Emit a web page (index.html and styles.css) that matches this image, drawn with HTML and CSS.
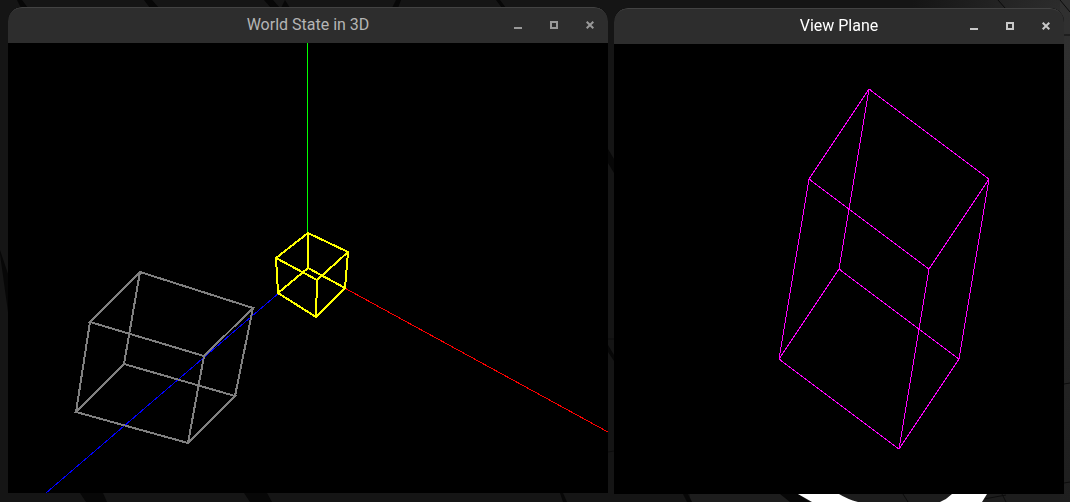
FILE: index.html
```html
<!DOCTYPE html>
<html lang="en">
<head>
<meta charset="utf-8">
<title>3D view planes</title>
<link rel="stylesheet" href="styles.css">
</head>
<body>
<svg class="wallpaper" viewBox="0 0 1070 502" preserveAspectRatio="none" aria-hidden="true">
  <defs>
    <radialGradient id="glow" cx="1070" cy="30" r="160" gradientUnits="userSpaceOnUse">
      <stop offset="0" stop-color="#303030"/>
      <stop offset="1" stop-color="#303030" stop-opacity="0"/>
    </radialGradient>
    <linearGradient id="edge" x1="0" x2="0" y1="0" y2="1">
      <stop offset="0" stop-color="#303030"/>
      <stop offset="1" stop-color="#1e1e1e"/>
    </linearGradient>
  </defs>
  <rect width="1070" height="502" fill="#151515"/>
  <rect x="690" y="490" width="380" height="12" fill="#1d1d1d"/>
  <rect x="1060" width="10" height="502" fill="url(#edge)"/>
  <rect x="880" width="190" height="60" fill="url(#glow)"/>
  <g fill="#070707">
    <path d="M17 0h5l6 8h-7zM144 0h8l7 8h-9zM264 0h9l7 8h-9zM285 0l5 8h-9zM396 0h5l-3 8h-6zM496 0h4l6 8h-4z"/>
    <path d="M0 250l8 24v38l-8-58zM608 149l6 10v14l-6-10zM608 345l6 10v6l-6-9z"/>
    <path d="M80 493h23l4 9H86zM244 493h23l5 9h-22zM560 493h3l4 9h-4zM683 494h5l4 8h-5zM780 494h18l12 8h-20z"/>
  </g>
  <g fill="none" stroke="#0c0c0c">
    <path d="M608 339h6M608 452l6-1M1064 35h6M1064 384l6-1M1064 483l6-1M998 0l7 8M1060 0l10 12M903 494l5 8M984 499l22-4M1002 494l4 8"/>
  </g>
  <path d="M798 494h41q8 5 19 8h-46zM952 494h35l-5 8h-42q7-3 12-8z" fill="#fff"/>
</svg>
<main class="desktop">
  <section class="window window-inactive" aria-labelledby="world-title">
    <header class="titlebar">
      <h1 class="title" id="world-title">World State in 3D</h1>
      <div class="controls">
        <button class="control" type="button" aria-label="Minimize"><svg class="icon" viewBox="0 0 8 8"><path d="M0 6h8v2H0z"/></svg></button>
        <button class="control" type="button" aria-label="Maximize"><svg class="icon" viewBox="0 0 8 8"><path fill-rule="evenodd" d="M0 0h8v8H0zM2 2v4h4V2z"/></svg></button>
        <button class="control" type="button" aria-label="Close"><svg class="icon" viewBox="0 0 8 8"><path class="cross" d="M.7.7l6.6 6.6M7.3.7L.7 7.3"/></svg></button>
      </div>
    </header>
    <svg class="scene" viewBox="8 43 600 450" role="img" aria-label="Two wireframe boxes and the coordinate axes">
      <path class="axis axis-y" d="M307.5 43V268"/>
      <path class="axis axis-x" d="M308 268L608 432"/>
      <path class="axis axis-z" d="M308 268L46 493"/>
      <path class="box box-grey" d="M140 272L253 308L204 356L90 322ZM124 364L235 396L188 443L76 412ZM140 272L124 364M253 308L235 396M204 356L188 443M90 322L76 412"/>
      <path class="box box-yellow" d="M308 233L348 252L317 280L276 258ZM308 268L345 288L316 317L278 293ZM308 233V268M348 252L345 288M317 280L316 317M276 258L278 293"/>
    </svg>
  </section>
  <section class="window window-active" aria-labelledby="plane-title">
    <header class="titlebar">
      <h1 class="title" id="plane-title">View Plane</h1>
      <div class="controls">
        <button class="control" type="button" aria-label="Minimize"><svg class="icon" viewBox="0 0 8 8"><path d="M0 6h8v2H0z"/></svg></button>
        <button class="control" type="button" aria-label="Maximize"><svg class="icon" viewBox="0 0 8 8"><path fill-rule="evenodd" d="M0 0h8v8H0zM2 2v4h4V2z"/></svg></button>
        <button class="control" type="button" aria-label="Close"><svg class="icon" viewBox="0 0 8 8"><path class="cross" d="M.7.7l6.6 6.6M7.3.7L.7 7.3"/></svg></button>
      </div>
    </header>
    <svg class="scene" viewBox="614 44 450 450" role="img" aria-label="Projected wireframe box">
      <path class="projection" d="M869 89L989 179L929 269L809 179ZM839 269L959 359L899 449L779 359ZM869 89L839 269M989 179L959 359M929 269L899 449M809 179L779 359"/>
    </svg>
  </section>
</main>
</body>
</html>
```

FILE: styles.css
```css
* {
  box-sizing: border-box;
}

body {
  margin: 0;
  min-height: 100vh;
  background: #151515;
  font-family: Roboto, "Noto Sans", sans-serif;
}

.wallpaper {
  position: fixed;
  inset: 0;
  z-index: -1;
  width: 100%;
  height: 100%;
}

.desktop {
  display: grid;
  grid-template-columns: 600fr 450fr;
  align-items: start;
  gap: 6px;
  padding: 7px 6px 8px 8px;
}

.window {
  border-radius: 14px 14px 0 0;
  overflow: hidden;
  background: #000;
}

.window-active {
  margin-top: 1px;
}

.titlebar {
  display: grid;
  grid-template-columns: 1fr auto 1fr;
  align-items: center;
  height: 36px;
  padding: 0 14px 2px;
  border-top: 1px solid #434343;
  border-radius: 14px 14px 0 0;
  background: #2d2d2d;
}

.title {
  grid-column: 2;
  margin: 0;
  font-size: 16px;
  font-weight: 400;
  line-height: 20px;
  color: #fff;
}

.controls {
  display: flex;
  justify-content: flex-end;
  gap: 28px;
}

.control {
  display: flex;
  padding: 0;
  border: 0;
  background: none;
  color: #c8c8c8;
}

.window-inactive .title {
  color: #b5b5b5;
}

.window-inactive .control {
  color: #999;
}

.icon {
  width: 8px;
  height: 8px;
  fill: currentColor;
}

.cross {
  fill: none;
  stroke: currentColor;
  stroke-width: 2;
}

.scene {
  display: block;
  width: 100%;
  height: auto;
  fill: none;
  shape-rendering: crispEdges;
}

.axis {
  stroke-width: 1;
}

.axis-x {
  stroke: #f00;
}

.axis-y {
  stroke: #0f0;
}

.axis-z {
  stroke: #00f;
}

.box {
  stroke-width: 2;
}

.box-grey {
  stroke: #808080;
}

.box-yellow {
  stroke: #ff0;
}

.projection {
  stroke: #f0f;
  stroke-width: 1;
}
```
